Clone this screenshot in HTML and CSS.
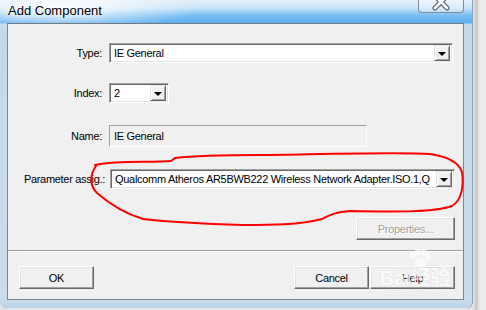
FILE: index.html
```html
<!DOCTYPE html>
<html lang="en">
<head>
    <meta charset="UTF-8">
    <title>Add Component</title>
    <link rel="stylesheet" href="styles.css">
</head>
<body>
    <div class="screen">
        <div class="window">
            <div class="titlebar">
                <span class="title">Add Component</span>
                <div class="close-btn">
                    <svg width="20" height="12" viewBox="0 0 20 12">
                        <path d="M4,-3 L16,9 M16,-3 L4,9" stroke="#5a6470" stroke-width="5" stroke-linecap="round"/>
                        <path d="M4,-3 L16,9 M16,-3 L4,9" stroke="#ffffff" stroke-width="2.6" stroke-linecap="round"/>
                    </svg>
                </div>
            </div>
            <div class="client">
                <div class="row row-type">
                    <label class="lbl">Type:</label>
                    <div class="combo combo-type">
                        <span class="combo-text">IE General</span>
                        <span class="arrow"><i></i></span>
                    </div>
                </div>
                <div class="row row-index">
                    <label class="lbl">Index:</label>
                    <div class="combo combo-index">
                        <span class="combo-text">2</span>
                        <span class="arrow"><i></i></span>
                    </div>
                </div>
                <div class="row row-name">
                    <label class="lbl">Name:</label>
                    <div class="textbox">IE General</div>
                </div>
                <div class="row row-param">
                    <label class="lbl lbl-wide">Parameter assig.:</label>
                    <div class="combo combo-param">
                        <span class="combo-text">Qualcomm Atheros AR5BWB222 Wireless Network Adapter.ISO.1,Q</span>
                        <span class="arrow"><i></i></span>
                    </div>
                </div>
                <div class="row row-props">
                    <button class="btn btn-props" disabled>Properties...</button>
                </div>
                <div class="separator"></div>
                <div class="row row-buttons">
                    <button class="btn btn-ok">OK</button>
                    <div class="btn-group">
                        <button class="btn btn-cancel">Cancel</button>
                        <button class="btn btn-help">Help</button>
                    </div>
                </div>
            </div>
        </div>

        <!-- hand-drawn mark over the dialog -->
        <svg class="scribble" width="486" height="310" viewBox="0 0 486 310">
            <path d="M95,165 C120,160 150,163 171,161 L175,158 C200,155 230,155 260,155 C330,154 400,152 430,154 C450,157 459,163 462,172 C464,185 462,200 452,206 C435,212 400,212 350,211 C335,212 330,215 322,219 C300,225 270,225 243,225 C210,224 170,222 143,219 C120,212 105,200 97,193 C90,186 89,176 96,166"
                  fill="none" stroke="#ff0000" stroke-width="2" stroke-linecap="round"/>
        </svg>

        <div class="watermark">
            <svg class="paw" width="26" height="20" viewBox="0 0 26 20">
                <ellipse cx="6" cy="8" rx="3" ry="3.5" fill="#fff"/>
                <ellipse cx="11" cy="4" rx="3" ry="3.5" fill="#fff"/>
                <ellipse cx="17" cy="4" rx="3" ry="3.5" fill="#fff"/>
                <ellipse cx="21" cy="9" rx="3" ry="3.5" fill="#fff"/>
                <ellipse cx="13.5" cy="15" rx="6" ry="4.5" fill="#fff"/>
            </svg>
            <div class="wm-brand">Bai经验</div>
            <div class="wm-url">jingyan.baidu.com</div>
        </div>
    </div>
</body>
</html>
```

FILE: styles.css
```css
* {
    box-sizing: border-box;
}
body {
    margin: 0;
    background: #dcdcdc;
    font-family: "Liberation Sans", Arial, sans-serif;
    font-size: 11px;
    letter-spacing: -0.3px;
    color: #000;
}
.screen {
    position: relative;
    width: 486px;
    height: 310px;
    overflow: hidden;
    background: linear-gradient(to right, #e2e2e2 0, #e2e2e2 474px, #c4c4c4 476px, #ececec 480px);
}
.window {
    width: 472px;
    height: 308px;
    padding: 0 8px 8px 7px;
    border-radius: 0 0 6px 6px;
    background:
        radial-gradient(ellipse 140px 22px at 60px 8px, rgba(255,255,255,0.95), rgba(255,255,255,0) 100%),
        linear-gradient(to bottom, #e3eff9 0, #c8e3f8 8px, #7cc0f3 15px, #5eaef0 23px, #c3d9ea 24px, #c9dcec 300px, #b9d3e8 308px);
    box-shadow: 1px 0 0 #8aa0b4;
}
.titlebar {
    position: relative;
    height: 23px;
    display: flex;
    align-items: center;
}
.title {
    font-size: 13px;
    letter-spacing: 0;
    margin: -3px 0 0 1px;
    text-shadow: 0 0 6px #fff, 0 0 10px #fff;
}
.close-btn {
    position: absolute;
    top: -1px;
    right: 0;
    width: 46px;
    height: 14px;
    border: 1px solid #7f8d9a;
    border-top: none;
    border-radius: 0 0 4px 4px;
    background: linear-gradient(to bottom, rgba(255,255,255,0.5), rgba(220,235,248,0.6));
    display: flex;
    justify-content: center;
}
.client {
    height: 277px;
    background: #f0f0f0;
    border-top: 1px solid #6f7a86;
    border-left: 1px solid #7a8894;
    border-right: 1px solid #7a8894;
    border-bottom: 1px solid #7a8894;
    display: flex;
    flex-direction: column;
}
.row {
    display: flex;
    align-items: center;
}
.lbl {
    width: 94px;
    margin-right: 7px;
    text-align: right;
    white-space: nowrap;
}
.lbl-wide {
    width: 97px;
    margin-right: 5px;
}
.row-type {
    margin-top: 19px;
}
.row-index {
    margin-top: 20px;
}
.row-name {
    margin-top: 22px;
}
.row-param {
    margin-top: 22px;
}
.row-props {
    margin-top: 28px;
    justify-content: flex-end;
    padding-right: 8px;
}
.combo {
    height: 20px;
    display: flex;
    align-items: center;
    background: #fff;
    border: 1px solid;
    border-color: #a0a0a0 #ffffff #ffffff #a0a0a0;
    box-shadow: inset 1px 1px 0 #696969, inset -1px -1px 0 #e3e3e3;
    padding: 2px 2px 2px 3px;
}
.combo-type {
    width: 344px;
}
.combo-index {
    width: 60px;
}
.combo-param {
    width: 345px;
}
.combo-text {
    flex: 1;
    min-width: 0;
    white-space: nowrap;
    overflow: hidden;
    padding-left: 1px;
}
.arrow {
    width: 16px;
    height: 16px;
    flex-shrink: 0;
    background: #f0f0f0;
    border: 1px solid;
    border-color: #e3e3e3 #696969 #696969 #e3e3e3;
    box-shadow: inset 1px 1px 0 #fff, inset -1px -1px 0 #a0a0a0;
    display: flex;
    align-items: center;
    justify-content: center;
}
.arrow i {
    width: 0;
    height: 0;
    border-left: 4px solid transparent;
    border-right: 4px solid transparent;
    border-top: 4px solid #000;
    margin-top: 1px;
}
.textbox {
    width: 258px;
    height: 22px;
    padding: 3px 4px;
    line-height: 14px;
    background: #f0f0f0;
    border: 1px solid;
    border-color: #a0a0a0 #ffffff #ffffff #a0a0a0;
}
.btn {
    font-family: inherit;
    font-size: 11px;
    letter-spacing: -0.3px;
    color: #000;
    height: 23px;
    padding: 0;
    background: #f0f0f0;
    border: 1px solid;
    border-color: #ffffff #696969 #696969 #ffffff;
    box-shadow: inset -1px -1px 0 #a0a0a0, inset 1px 1px 0 #e3e3e3;
}
.btn-props {
    width: 99px;
    color: #a0a0a0;
    text-shadow: 1px 1px 0 #fff;
}
.separator {
    margin-top: 10px;
    height: 2px;
    border-top: 1px solid #a0a0a0;
    border-bottom: 1px solid #ffffff;
}
.row-buttons {
    margin-top: 14px;
    padding: 0 8px 0 11px;
    justify-content: space-between;
}
.btn-ok {
    width: 75px;
}
.btn-group {
    display: flex;
    gap: 1px;
}
.btn-cancel {
    width: 75px;
}
.btn-help {
    width: 85px;
}
.scribble {
    position: absolute;
    top: 0;
    left: 0;
    pointer-events: none;
}
.watermark {
    position: absolute;
    left: 372px;
    top: 248px;
    width: 86px;
    display: flex;
    flex-direction: column;
    align-items: center;
    opacity: 0.7;
    pointer-events: none;
    letter-spacing: 0;
}
.paw {
    margin-left: 10px;
}
.wm-brand {
    font-family: "Liberation Sans", "Noto Sans CJK SC", sans-serif;
    font-size: 20px;
    font-weight: bold;
    line-height: 20px;
    color: #fff;
    text-shadow: 0 0 1px #c8c8c8;
    white-space: nowrap;
}
.wm-url {
    font-family: "Liberation Serif", serif;
    font-size: 8px;
    color: #fff;
    text-shadow: 0 0 1px #c8c8c8;
}
```
